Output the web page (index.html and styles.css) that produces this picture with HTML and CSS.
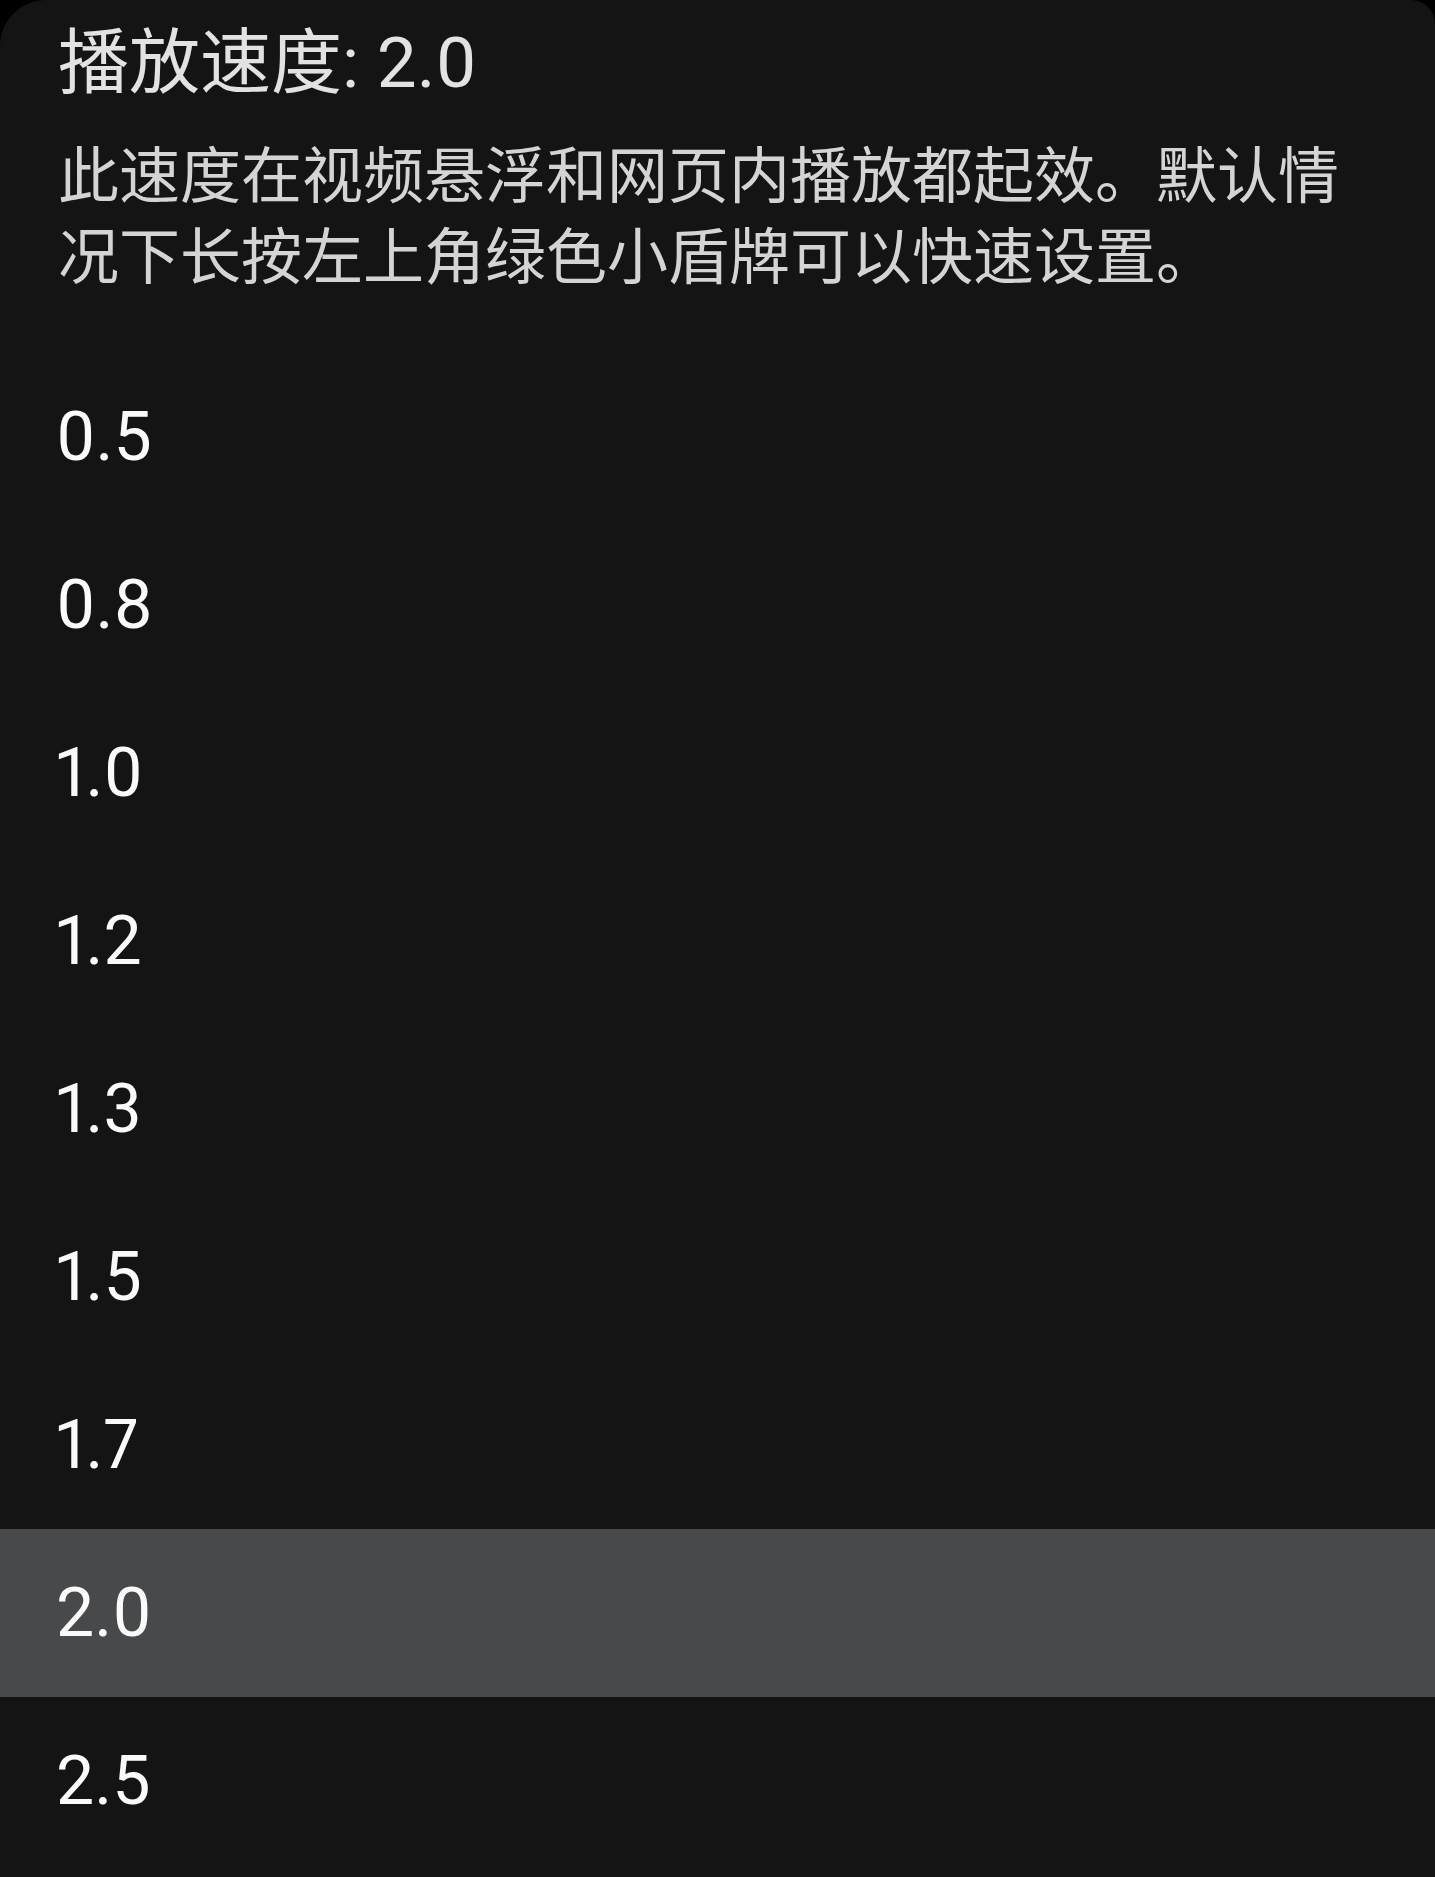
FILE: index.html
```html
<!DOCTYPE html>
<html lang="zh-CN">
<head>
    <meta charset="UTF-8">
    <meta name="viewport" content="width=device-width, initial-scale=1.0">
    <title>播放速度</title>
    <link rel="stylesheet" href="styles.css">
</head>
<body>
    <div class="dialog">
        <h1 class="title">播放速度: 2.0</h1>
        <p class="desc">此速度在视频悬浮和网页内播放都起效。默认情况下长按左上角绿色小盾牌可以快速设置。</p>
        <ul class="speeds">
            <li class="speed">0.5</li>
            <li class="speed">0.8</li>
            <li class="speed">1.0</li>
            <li class="speed">1.2</li>
            <li class="speed">1.3</li>
            <li class="speed">1.5</li>
            <li class="speed">1.7</li>
            <li class="speed selected">2.0</li>
            <li class="speed">2.5</li>
        </ul>
    </div>
</body>
</html>
```

FILE: styles.css
```css
html, body {
    margin: 0;
    height: 100%;
    background: #000;
}

body {
    font-family: Roboto, "Noto Sans CJK SC", sans-serif;
    font-variant-numeric: proportional-nums;
    overflow: hidden;
}

.dialog {
    background: #141414;
    min-height: 100%;
    border-radius: 46px 24px 0 0;
    padding-top: 21px;
}

.title {
    margin: 0;
    padding: 0 58px;
    font-size: 71px;
    font-weight: 400;
    line-height: 84px;
    color: #e2e2e2;
}

.desc {
    margin: 32px 0 0;
    padding: 0 58px;
    font-size: 61px;
    line-height: 81px;
    color: #d4d4d4;
}

.speeds {
    list-style: none;
    margin: 54px 0 0;
    padding: 0;
}

.speed {
    height: 168px;
    display: flex;
    align-items: center;
    padding: 0 56px;
    font-size: 68px;
    color: #fafafa;
}

.speed.selected {
    background: #48494b;
}
```
